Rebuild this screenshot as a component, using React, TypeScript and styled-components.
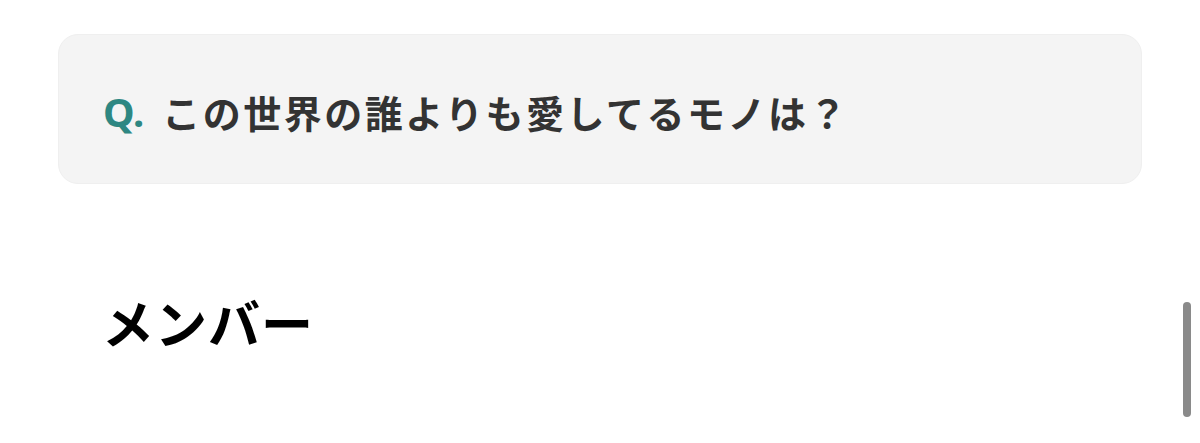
import React from "react";
import styled, { createGlobalStyle } from "styled-components";

const GlobalStyle = createGlobalStyle`
  html, body {
    margin: 0;
    padding: 0;
    background: #ffffff;
    overflow: hidden;
  }
  body {
    font-family: "Noto Sans CJK JP", "Noto Sans", sans-serif;
  }
`;

const Page = styled.div`
  position: relative;
  width: 1200px;
  height: 443px;
  box-sizing: border-box;
  padding: 34px 58px 0 58px;
`;

const QuestionCard = styled.div`
  display: flex;
  align-items: center;
  height: 150px;
  box-sizing: border-box;
  padding: 6px 0 0 44px;
  background: #f4f4f4;
  border: 1px solid #efefef;
  border-radius: 20px;
`;

const QMark = styled.span`
  font-family: "Noto Sans", "Open Sans", sans-serif;
  font-weight: 700;
  font-size: 40px;
  color: #2e8782;
  margin-right: 18px;
  line-height: 1;
`;

const QuestionText = styled.span`
  font-family: "Noto Sans CJK JP", sans-serif;
  font-weight: 700;
  font-size: 38px;
  letter-spacing: 2.5px;
  color: #333333;
  line-height: 1;
`;

const SectionTitle = styled.h2`
  margin: 112px 0 0 44px;
  font-family: "Noto Sans CJK JP", sans-serif;
  font-weight: 700;
  font-size: 52px;
  letter-spacing: 1px;
  line-height: 1;
  color: #000000;
`;

const ScrollThumb = styled.div`
  position: absolute;
  right: 9px;
  top: 302px;
  width: 8px;
  height: 115px;
  border-radius: 4px;
  background: #8a8a8a;
`;

export default function App() {
  return (
    <>
      <GlobalStyle />
      <Page>
        <QuestionCard>
          <QMark>Q.</QMark>
          <QuestionText>この世界の誰よりも愛してるモノは？</QuestionText>
        </QuestionCard>
        <SectionTitle>メンバー</SectionTitle>
        <ScrollThumb />
      </Page>
    </>
  );
}
